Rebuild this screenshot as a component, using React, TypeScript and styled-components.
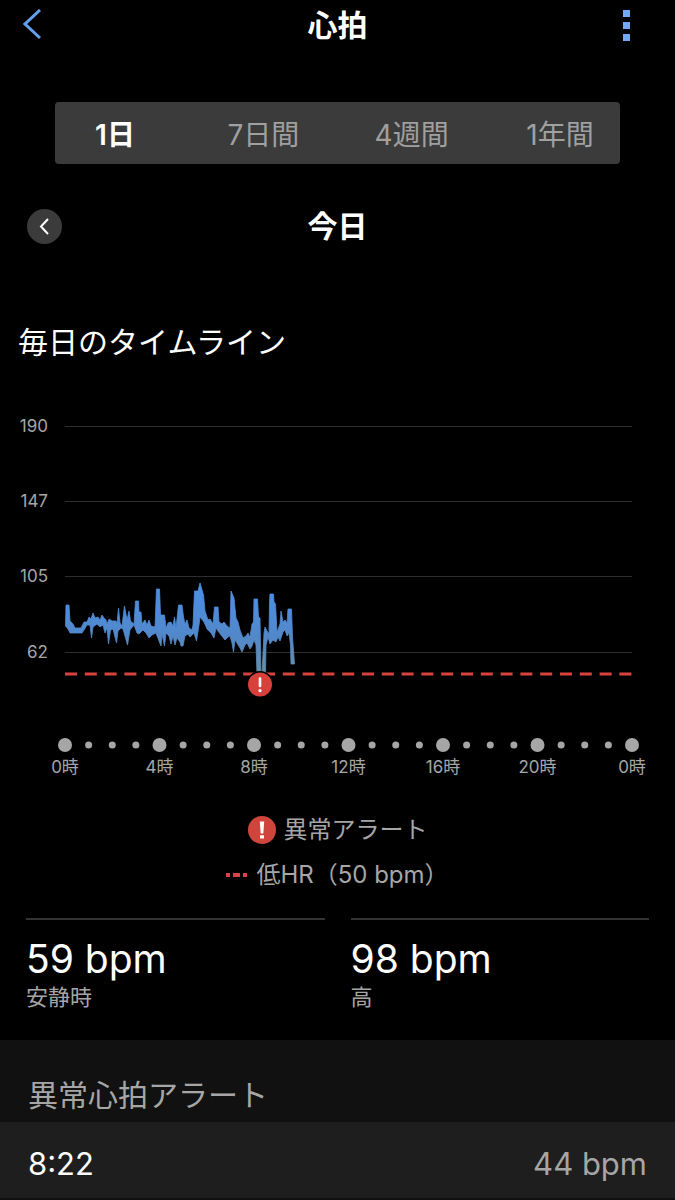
import React, { useState } from "react";
import styled, { createGlobalStyle } from "styled-components";

const GlobalStyle = createGlobalStyle`
  *, *::before, *::after { box-sizing: border-box; }
  body {
    margin: 0;
    background: #000;
    color: #fff;
    font-family: Inter, "Noto Sans CJK JP", sans-serif;
  }
  h1, h2, p, dl, dd, dt, ul { margin: 0; padding: 0; font-weight: 400; }
  button { font: inherit; color: inherit; background: none; border: 0; padding: 0; cursor: pointer; }
`;

const Page = styled.div`
  min-height: 100vh;
  display: flex;
  flex-direction: column;
`;

const Bar = styled.header<{ $top?: boolean }>`
  display: grid;
  grid-template-columns: 72px 1fr 72px;
  align-items: center;
  height: ${(p) => (p.$top ? 50 : 36)}px;
  margin-top: ${(p) => (p.$top ? 0 : 44)}px;
`;

const BarTitle = styled.h1`
  font-size: 30px;
  line-height: 36px;
  font-weight: 600;
  text-align: center;
`;

const IconButton = styled.button<{ $end?: boolean }>`
  display: flex;
  justify-self: ${(p) => (p.$end ? "end" : "start")};
  padding: ${(p) => (p.$end ? "2px 44px 0 0" : "0 0 0 22px")};
`;

const RoundButton = styled.button`
  display: flex;
  align-items: center;
  justify-content: center;
  width: 35px;
  height: 35px;
  margin-left: 27px;
  border-radius: 50%;
  background: #3b3b3b;
`;

const Tabs = styled.div`
  display: flex;
  justify-content: space-between;
  height: 62px;
  margin: 52px 55px 0;
  border-radius: 4px;
  background: #3b3b3b;
`;

const Tab = styled.button<{ $active: boolean }>`
  width: 120px;
  padding-top: 4px;
  font-size: 28px;
  line-height: 36px;
  white-space: nowrap;
  font-weight: ${(p) => (p.$active ? 600 : 400)};
  color: ${(p) => (p.$active ? "#fff" : "#a0a0a0")};
`;

const SectionTitle = styled.h2`
  margin: 80px 18px 0;
  font-size: 30px;
  line-height: 36px;
`;

const Chart = styled.svg`
  display: block;
  width: 100%;
  height: auto;
  margin-top: 50px;
  font-size: 17px;
  fill: #a6a6a6;
`;

const HourLabel = styled.text`
  text-anchor: middle;
`;

const Legend = styled.ul`
  display: flex;
  flex-direction: column;
  align-items: center;
  gap: 10px;
  margin-top: 32px;
  list-style: none;
`;

const LegendItem = styled.li`
  display: flex;
  align-items: center;
  gap: 8px;
  font-size: 24px;
  line-height: 35px;
  color: #a6a6a6;
`;

const Stats = styled.dl`
  display: grid;
  grid-template-columns: 1fr 1fr;
  gap: 26px;
  margin: 26px 26px 0;
`;

const Stat = styled.div`
  display: flex;
  flex-direction: column-reverse;
  justify-content: flex-end;
  height: 122px;
  padding-top: 15px;
  border-top: 2px solid #333;
`;

const StatValue = styled.dd`
  font-size: 39px;
  line-height: 48px;
`;

const StatLabel = styled.dt`
  font-size: 22px;
  line-height: 28px;
  color: #a6a6a6;
`;

const Alerts = styled.section`
  flex: 1;
  background: #111;
`;

const AlertsTitle = styled.h2`
  padding: 37px 28px 9px;
  font-size: 30px;
  line-height: 36px;
  color: #a6a6a6;
`;

const AlertRow = styled.div`
  display: flex;
  justify-content: space-between;
  padding: 22px 28px 14px;
  border-bottom: 1px solid #111;
  background: #1e1e1e;
  font-size: 31px;
  line-height: 40px;
`;

const AlertValue = styled.span`
  color: #a6a6a6;
`;

const ranges = ["1日", "7日間", "4週間", "1年間"];
const levels = [
  { label: "190", y: 16 },
  { label: "147", y: 91 },
  { label: "105", y: 166 },
  { label: "62", y: 242 },
];
const hours = ["0時", "4時", "8時", "12時", "16時", "20時", "0時"];

const highs =
  "66,605 69,605 70,621 73,624 75,628 81,628 84,622 87,622 89,617 91,619 93,613 95,618 98,617 100,620 102,615 104,618 106,620 107,624 109,619 112,621 116,621 117,624 118.5,608 120,623 122,626 124.5,606 127,620 129,611 130.5,621 134,624 135.5,601 138.5,601 139,612 141,612 142,624 145,620 147,625 149,620 151,626 155,627 156.5,589 159.5,589 160.5,615 164.5,615 166,628 168,623 171,622 173,626 174.5,617 176,628 178.5,605 182,605 183.5,617 185,624 187,620 189,628 192,630 193,625 194.5,591 198,591 200,583 203.5,595 205,611 208,620 210,619 213,624 214.5,607 218,607 219,622 222,624 224,622 227,626 230,628 231,591 234,598 236,618 238,622 240,630 243,638 246,636 248,633 250,637 252,624 253.5,622 254,599 257.5,599 258.5,617 260,618 261,674 262,674 264,633 265,627 267,631 269,634 269.5,603 270,594 273.5,594 274,602 275.5,604 277,632 280,624 281,611 283,622 285,620 287,623 288,609 291.5,609 292.5,637 294.5,664";
const lows =
  "291,664 290.5,645 289,633 287,636 285,630 283,632 280,641 278,637 276,642 273,640 270,644 268,637 266,645 265.5,674 257,674 256,645 254,640 252,646 250,649 247,643 245,645 242,652 240,648 237,643 235,640 233.5,652 232,643 230,636 228,637 225,640 221,635 218,631 216,628 214,638 211,633 207,629 204,622 200,617 199,625 196.5,641 194,633 190,637 188,634 185,636 183,646 181,646 180,642 177,638 175,645 173,636 171,644 169,636 166,633 164.5,646 162,634 161,646 159,641 156,633 152,635 149,638 146,633 143,630 139,634 137,633 134,625 130,630 127.5,645 123,629 121,628 118,631 116.5,643 113,629 110.5,630 108.5,644 107,628 105,633 103,625 100,627 97,624 93,627 91.5,638 90,625 87,625 84,630 82,633 70,633 68,629 65.5,626";

const HeartRateChart = () => (
  <Chart viewBox="0 0 675 370" role="img" aria-label="毎日のタイムライン">
    <defs>
      <linearGradient id="rate" gradientUnits="userSpaceOnUse" x1="0" y1="583" x2="0" y2="674">
        <stop offset="0" stopColor="#4b8fe8" />
        <stop offset="0.6" stopColor="#5288c9" />
        <stop offset="1" stopColor="#668fa5" />
      </linearGradient>
    </defs>
    {levels.map((l) => (
      <g key={l.label}>
        <text x="48" y={l.y + 6} textAnchor="end">{l.label}</text>
        <rect x="65" y={l.y} width="567" height="1" fill="#2e2e2e" />
      </g>
    ))}
    <path d="M65 264H632" stroke="#d8433f" strokeWidth="3" strokeDasharray="12 7.8" />
    <g transform="translate(0 -410)">
      <polygon points={`${highs} ${lows}`} fill="url(#rate)" stroke="url(#rate)" strokeWidth="0.8" />
    </g>
    <g transform="translate(260 274.5)">
      <circle r="12.8" fill="#d8403c" stroke="#000" strokeWidth="1.6" />
      <path d="M0-6V1.5" stroke="#fff" strokeWidth="2.6" strokeLinecap="round" />
      <circle cy="6.2" r="1.6" fill="#fff" />
    </g>
    {Array.from({ length: 25 }, (_, i) => (
      <circle key={i} cx={65 + i * 23.625} cy="335" r={i % 4 === 0 ? 7 : 3.5} />
    ))}
    {hours.map((h, i) => (
      <HourLabel key={i} x={65 + i * 94.5} y="363">{h}</HourLabel>
    ))}
  </Chart>
);

export default function App() {
  const [range, setRange] = useState(0);
  return (
    <Page>
      <GlobalStyle />
      <Bar $top>
        <IconButton aria-label="戻る">
          <svg width="20" height="32" viewBox="0 0 20 32" fill="none" stroke="#659ff0" strokeWidth="3">
            <path d="M18 1 3 15 18 29" />
          </svg>
        </IconButton>
        <BarTitle>心拍</BarTitle>
        <IconButton $end aria-label="メニュー">
          <svg width="9" height="32" viewBox="0 0 9 32" fill="#72a8f5">
            <path d="M1 0h7v7H1zM1 12h7v7H1zM1 24h7v7H1z" />
          </svg>
        </IconButton>
      </Bar>
      <Tabs role="tablist">
        {ranges.map((r, i) => (
          <Tab key={r} role="tab" aria-selected={i === range} $active={i === range} onClick={() => setRange(i)}>
            {r}
          </Tab>
        ))}
      </Tabs>
      <Bar as="div">
        <RoundButton aria-label="前の日">
          <svg width="12" height="17" viewBox="0 0 12 17" fill="none" stroke="#fff" strokeWidth="2">
            <path d="M9 1 2 8.5 9 16" />
          </svg>
        </RoundButton>
        <BarTitle as="h2">今日</BarTitle>
      </Bar>
      <SectionTitle>毎日のタイムライン</SectionTitle>
      <HeartRateChart />
      <Legend>
        <LegendItem>
          <svg width="28" height="28" viewBox="-14 -14 28 28" aria-hidden="true">
            <circle r="14" fill="#d0453b" />
            <path d="M-2.2-8.5H2.2L1.3 3.5H-1.3ZM-2 5.2H2V8.6H-2Z" fill="#fff" />
          </svg>
          異常アラート
        </LegendItem>
        <LegendItem>
          <svg width="22" height="4" viewBox="0 0 22 4" fill="#d8434a" aria-hidden="true">
            <path d="M0 0h4v4H0zM7 0h7v4H7zM17 0h4v4h-4z" />
          </svg>
          低HR（50 bpm）
        </LegendItem>
      </Legend>
      <Stats>
        <Stat>
          <StatLabel>安静時</StatLabel>
          <StatValue>59 bpm</StatValue>
        </Stat>
        <Stat>
          <StatLabel>高</StatLabel>
          <StatValue>98 bpm</StatValue>
        </Stat>
      </Stats>
      <Alerts>
        <AlertsTitle>異常心拍アラート</AlertsTitle>
        <AlertRow>
          <span>8:22</span>
          <AlertValue>44 bpm</AlertValue>
        </AlertRow>
      </Alerts>
    </Page>
  );
}
